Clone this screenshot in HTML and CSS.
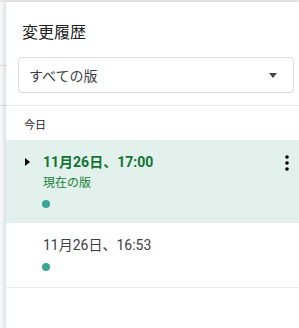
FILE: index.html
```html
<!DOCTYPE html>
<html lang="ja">
<head>
    <meta charset="UTF-8">
    <title>変更履歴</title>
    <link rel="stylesheet" href="styles.css">
</head>
<body>
    <div class="page">
        <div class="gutter">
            <div class="gutter-line first"></div>
            <div class="gutter-line second"></div>
        </div>
        <div class="panel">
            <h1 class="title">変更履歴</h1>
            <div class="select">
                <span>すべての版</span>
                <span class="caret"></span>
            </div>
            <div class="group">今日</div>

            <!-- 現在の版 -->
            <div class="version current">
                <span class="toggle"></span>
                <div class="info">
                    <div class="time">11月26日、17:00</div>
                    <div class="label">現在の版</div>
                    <span class="dot"></span>
                </div>
                <svg class="more" width="4" height="16" viewBox="0 0 4 16">
                    <circle cx="2" cy="2" r="1.8"/>
                    <circle cx="2" cy="8" r="1.8"/>
                    <circle cx="2" cy="14" r="1.8"/>
                </svg>
            </div>

            <div class="version">
                <div class="info">
                    <div class="time">11月26日、16:53</div>
                    <span class="dot"></span>
                </div>
            </div>
        </div>
    </div>
</body>
</html>
```

FILE: styles.css
```css
body {
    margin: 0;
    font-family: Roboto, "Noto Sans CJK JP", sans-serif;
    color: #202124;
    background: #fff;
    overflow: hidden;
}
.page {
    display: flex;
    height: 328px;
    border-top: 2px solid #e8e8e8;
    box-sizing: border-box;
}
.gutter {
    width: 6px;
    flex-shrink: 0;
    background: #f8f9fa;
}
.gutter-line {
    height: 1px;
    background: #e0e0e0;
}
.gutter-line.first {
    margin-top: 63px;
}
.gutter-line.second {
    margin-top: 39px;
}
.panel {
    flex: 1;
    box-shadow: -2px 0 4px rgba(0, 0, 0, 0.12);
    background: #fff;
    position: relative;
}
.title {
    margin: 0;
    padding: 20px 0 0 16px;
    font-size: 16px;
    font-weight: normal;
    line-height: 22px;
}
.select {
    display: flex;
    align-items: center;
    justify-content: space-between;
    margin: 13px 5px 0 12px;
    height: 34px;
    padding: 0 16px 0 10px;
    border: 1px solid #dadce0;
    border-radius: 4px;
    font-size: 14px;
    color: #3c4043;
}
.caret {
    border-left: 4px solid transparent;
    border-right: 4px solid transparent;
    border-top: 5px solid #444;
}
.group {
    border-top: 1px solid #e8eaed;
    margin-top: 12px;
    padding: 10px 0 0 18px;
    height: 24px;
    font-size: 11px;
}
.version {
    display: flex;
    align-items: flex-start;
    padding: 13px 0 0 37px;
    height: 51px;
    border-bottom: 1px solid #e8eaed;
    position: relative;
}
.version.current {
    background: #e2f1eb;
    height: 70px;
    border-bottom: none;
}
.toggle {
    position: absolute;
    left: 19px;
    top: 18px;
    border-top: 4px solid transparent;
    border-bottom: 4px solid transparent;
    border-left: 5px solid #000;
}
.info {
    flex: 1;
}
.time {
    font-size: 14px;
    line-height: 18px;
    color: #3c4043;
}
.current .time {
    color: #137333;
    font-weight: bold;
}
.label {
    color: #188038;
    font-size: 12px;
    line-height: 16px;
    margin-top: 4px;
}
.dot {
    display: block;
    width: 8px;
    height: 8px;
    border-radius: 50%;
    background: #3aa597;
    margin: 9px 0 0 -1px;
}
.more {
    margin: 2px 10px 0 0;
    fill: #000;
}
```
